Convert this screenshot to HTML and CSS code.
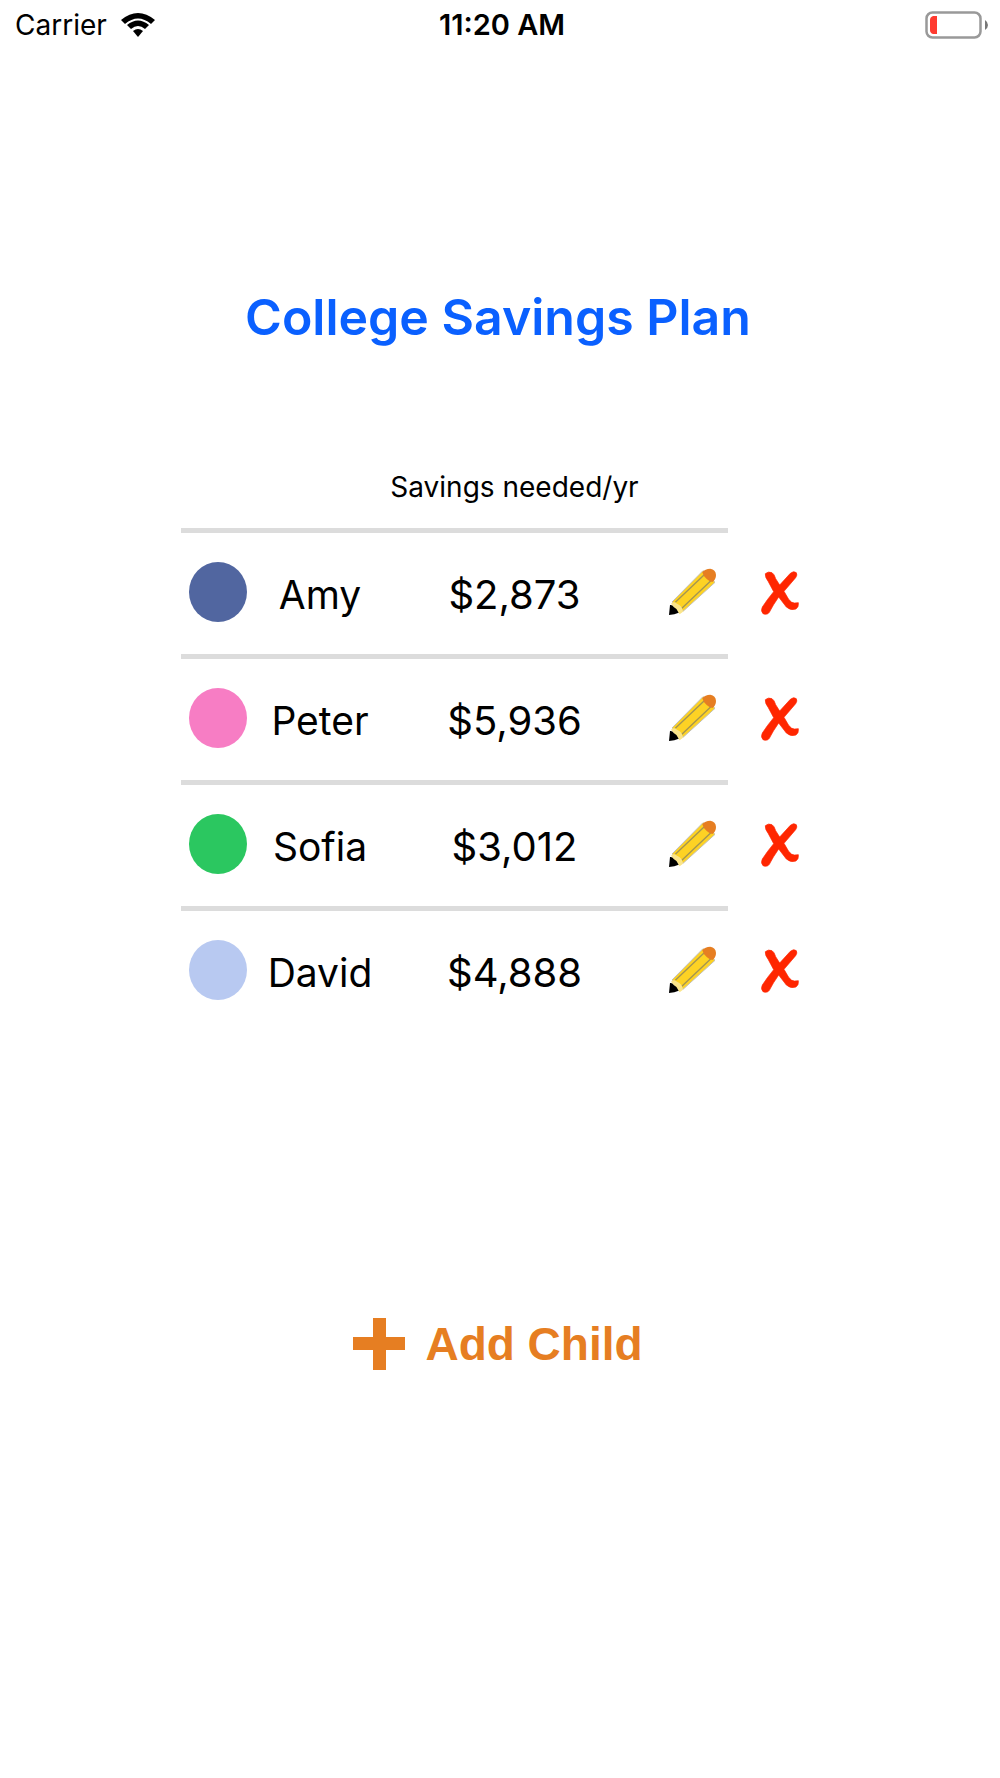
FILE: index.html
```html
<!DOCTYPE html>
<html lang="en">

<head>
    <meta charset="UTF-8">
    <meta name="viewport" content="width=device-width, initial-scale=1.0">
    <title>College Savings Plan</title>
    <link rel="stylesheet" href="styles.css">
</head>

<body>
    <!-- shapes shared by all rows -->
    <svg class="defs" aria-hidden="true">
        <symbol id="pencil" viewBox="15 21 144 144">
            <path d="M27 123 L120 29 L156 64 L60 151 Z" fill="#fdd224" stroke="#c4c0b0" stroke-width="3" />
            <path d="M37 124 L127 38 M55 143 L146 57" fill="none" stroke="#a39552" stroke-width="4" />
            <path d="M24 128 Q32 120 42 128 Q58 134 60 152 L50 160 Z" fill="#fbe58a" />
            <path d="M21 132 Q27 130 33 139 Q44 144 47 155 L34 160 L18 162 Z" fill="#000" />
            <path d="M118 34 Q126 23 142 23 Q158 25 159 42 Q159 56 148 63 Q140 62 131 54 Q120 44 118 34 Z" fill="#e67e22" />
        </symbol>
        <symbol id="cross" viewBox="32 36 112 132">
            <path d="M44 44 Q53 36 64 41 Q71 45 75 59 L87 78 L119 43 Q129 34 137 41 Q141 48 135 56 L100 97 L114 121 Q123 133 132 132 L143 131 Q145 144 136 150 Q119 156 107 144 L84 114 Q67 138 56 160 Q50 169 37 164 Q29 156 35 144 Q49 122 69 98 L53 68 Q42 54 44 44 Z" fill="#ff2600" stroke="#ff2600" stroke-width="2" />
        </symbol>
    </svg>

    <header class="status">
        <div class="carrier">
            <span>Carrier</span>
            <svg class="wifi" viewBox="0 0 34 24">
                <path d="M0 7 Q17 -7 34 7 L30 11 Q17 0 4 11 Z" />
                <path d="M6 12 Q17 3 28 12 L24 16 Q17 10 10 16 Z" />
                <path d="M12 18 Q17 14 22 18 L17 24 Z" />
            </svg>
        </div>
        <div class="time">11:20 AM</div>
        <svg class="battery" viewBox="0 0 64 28">
            <rect x="1.5" y="1.5" width="54" height="25" rx="6" fill="none" stroke="#999" stroke-width="2.5" />
            <path d="M8 5 H12 V23 H8 Q5 22 5 19 V9 Q5 6 8 5 Z" fill="#ff3b30" />
            <path d="M60 9 Q63 11 63 14 Q63 17 60 19 Z" fill="#777" />
        </svg>
    </header>

    <main>
        <h1>College Savings Plan</h1>

        <table class="children">
            <thead>
                <tr>
                    <td class="color"></td>
                    <td class="name"></td>
                    <th class="savings">Savings needed/yr</th>
                    <td class="edit"></td>
                    <td class="delete"></td>
                </tr>
            </thead>
            <tbody>
                <tr>
                    <td class="color"><span class="dot amy"></span></td>
                    <td class="name">Amy</td>
                    <td>$2,873</td>
                    <td class="edit"><button aria-label="Edit Amy"><svg class="pencil"><use href="#pencil" /></svg></button></td>
                    <td class="delete"><button aria-label="Delete Amy"><svg class="cross"><use href="#cross" /></svg></button></td>
                </tr>
                <tr>
                    <td class="color"><span class="dot peter"></span></td>
                    <td class="name">Peter</td>
                    <td>$5,936</td>
                    <td class="edit"><button aria-label="Edit Peter"><svg class="pencil"><use href="#pencil" /></svg></button></td>
                    <td class="delete"><button aria-label="Delete Peter"><svg class="cross"><use href="#cross" /></svg></button></td>
                </tr>
                <tr>
                    <td class="color"><span class="dot sofia"></span></td>
                    <td class="name">Sofia</td>
                    <td>$3,012</td>
                    <td class="edit"><button aria-label="Edit Sofia"><svg class="pencil"><use href="#pencil" /></svg></button></td>
                    <td class="delete"><button aria-label="Delete Sofia"><svg class="cross"><use href="#cross" /></svg></button></td>
                </tr>
                <tr>
                    <td class="color"><span class="dot david"></span></td>
                    <td class="name">David</td>
                    <td>$4,888</td>
                    <td class="edit"><button aria-label="Edit David"><svg class="pencil"><use href="#pencil" /></svg></button></td>
                    <td class="delete"><button aria-label="Delete David"><svg class="cross"><use href="#cross" /></svg></button></td>
                </tr>
            </tbody>
        </table>

        <button class="add">
            <svg class="plus" viewBox="0 0 52 52">
                <path d="M20 0 H33 V19 H52 V32 H33 V52 H20 V32 H0 V19 H20 Z" />
            </svg>
            Add Child
        </button>
    </main>
</body>

</html>
```
FILE: styles.css
```css
body {
    margin: 0;
    background: #fff;
    color: #000;
    font-family: Inter, "Liberation Sans", sans-serif;
}

button {
    padding: 0;
    border: 0;
    background: none;
    cursor: pointer;
}

svg {
    display: block;
}

.defs {
    position: absolute;
    width: 0;
    height: 0;
}

/* status bar */
.status {
    display: grid;
    grid-template-columns: 1fr auto 1fr;
    align-items: center;
    padding: 8px 11px 8px 15px;
    font-size: 28px;
    line-height: 34px;
}

.carrier {
    display: flex;
    align-items: center;
    gap: 14px;
}

.wifi {
    width: 34px;
    height: 24px;
}

.time {
    font-size: 29px;
    font-weight: 600;
}

.battery {
    width: 64px;
    height: 28px;
    justify-self: end;
}

main {
    display: flex;
    flex-direction: column;
    align-items: center;
    padding-top: 235px;
}

h1 {
    margin: 0;
    padding-right: 4px;
    color: #0a60ff;
    font-size: 50px;
    font-weight: 600;
    line-height: 64px;
}

/* children list */
.children {
    width: 638px;
    max-width: 100%;
    margin-top: 121px;
    border-spacing: 0;
    table-layout: fixed;
    text-align: center;
    font-size: 40px;
}

.children td,
.children th {
    padding: 0;
    vertical-align: middle;
}

.children th {
    padding-bottom: 24px;
    font-size: 28px;
    font-weight: 400;
    line-height: 34px;
    white-space: nowrap;
}

.children tbody td {
    height: 119px;
    padding-top: 2px;
    border-top: 5px solid #dcdcdc;
}

.children tbody .color,
.children tbody .edit,
.children tbody .delete {
    height: 117px;
    padding: 0 0 4px;
}

.children tbody .delete {
    height: 119px;
    padding-bottom: 2px;
    border-top-color: transparent;
}

.children tbody .name {
    font-size: 39px;
}

.color {
    width: 74px;
}

.name {
    width: 130px;
}

.edit {
    width: 84px;
}

.delete {
    width: 91px;
}

.children tbody .edit,
.children tbody .delete {
    padding-left: 12px;
}

.children button,
.dot {
    display: block;
    margin: 0 auto;
}

.dot {
    width: 58px;
    height: 60px;
    border-radius: 50%;
}

.amy {
    background: #5166a0;
}

.peter {
    background: #f77dc4;
}

.sofia {
    background: #2bc760;
}

.david {
    background: #b8c9f1;
}

.pencil {
    width: 48px;
    height: 48px;
}

.cross {
    width: 38px;
    height: 44px;
}

.add {
    display: flex;
    align-items: center;
    gap: 20px;
    margin-top: 286px;
    padding-right: 4px;
    color: #e67e22;
    font: bold 46px/52px "Liberation Sans", sans-serif;
}

.plus {
    width: 52px;
    height: 52px;
    fill: #e67e22;
}
```
